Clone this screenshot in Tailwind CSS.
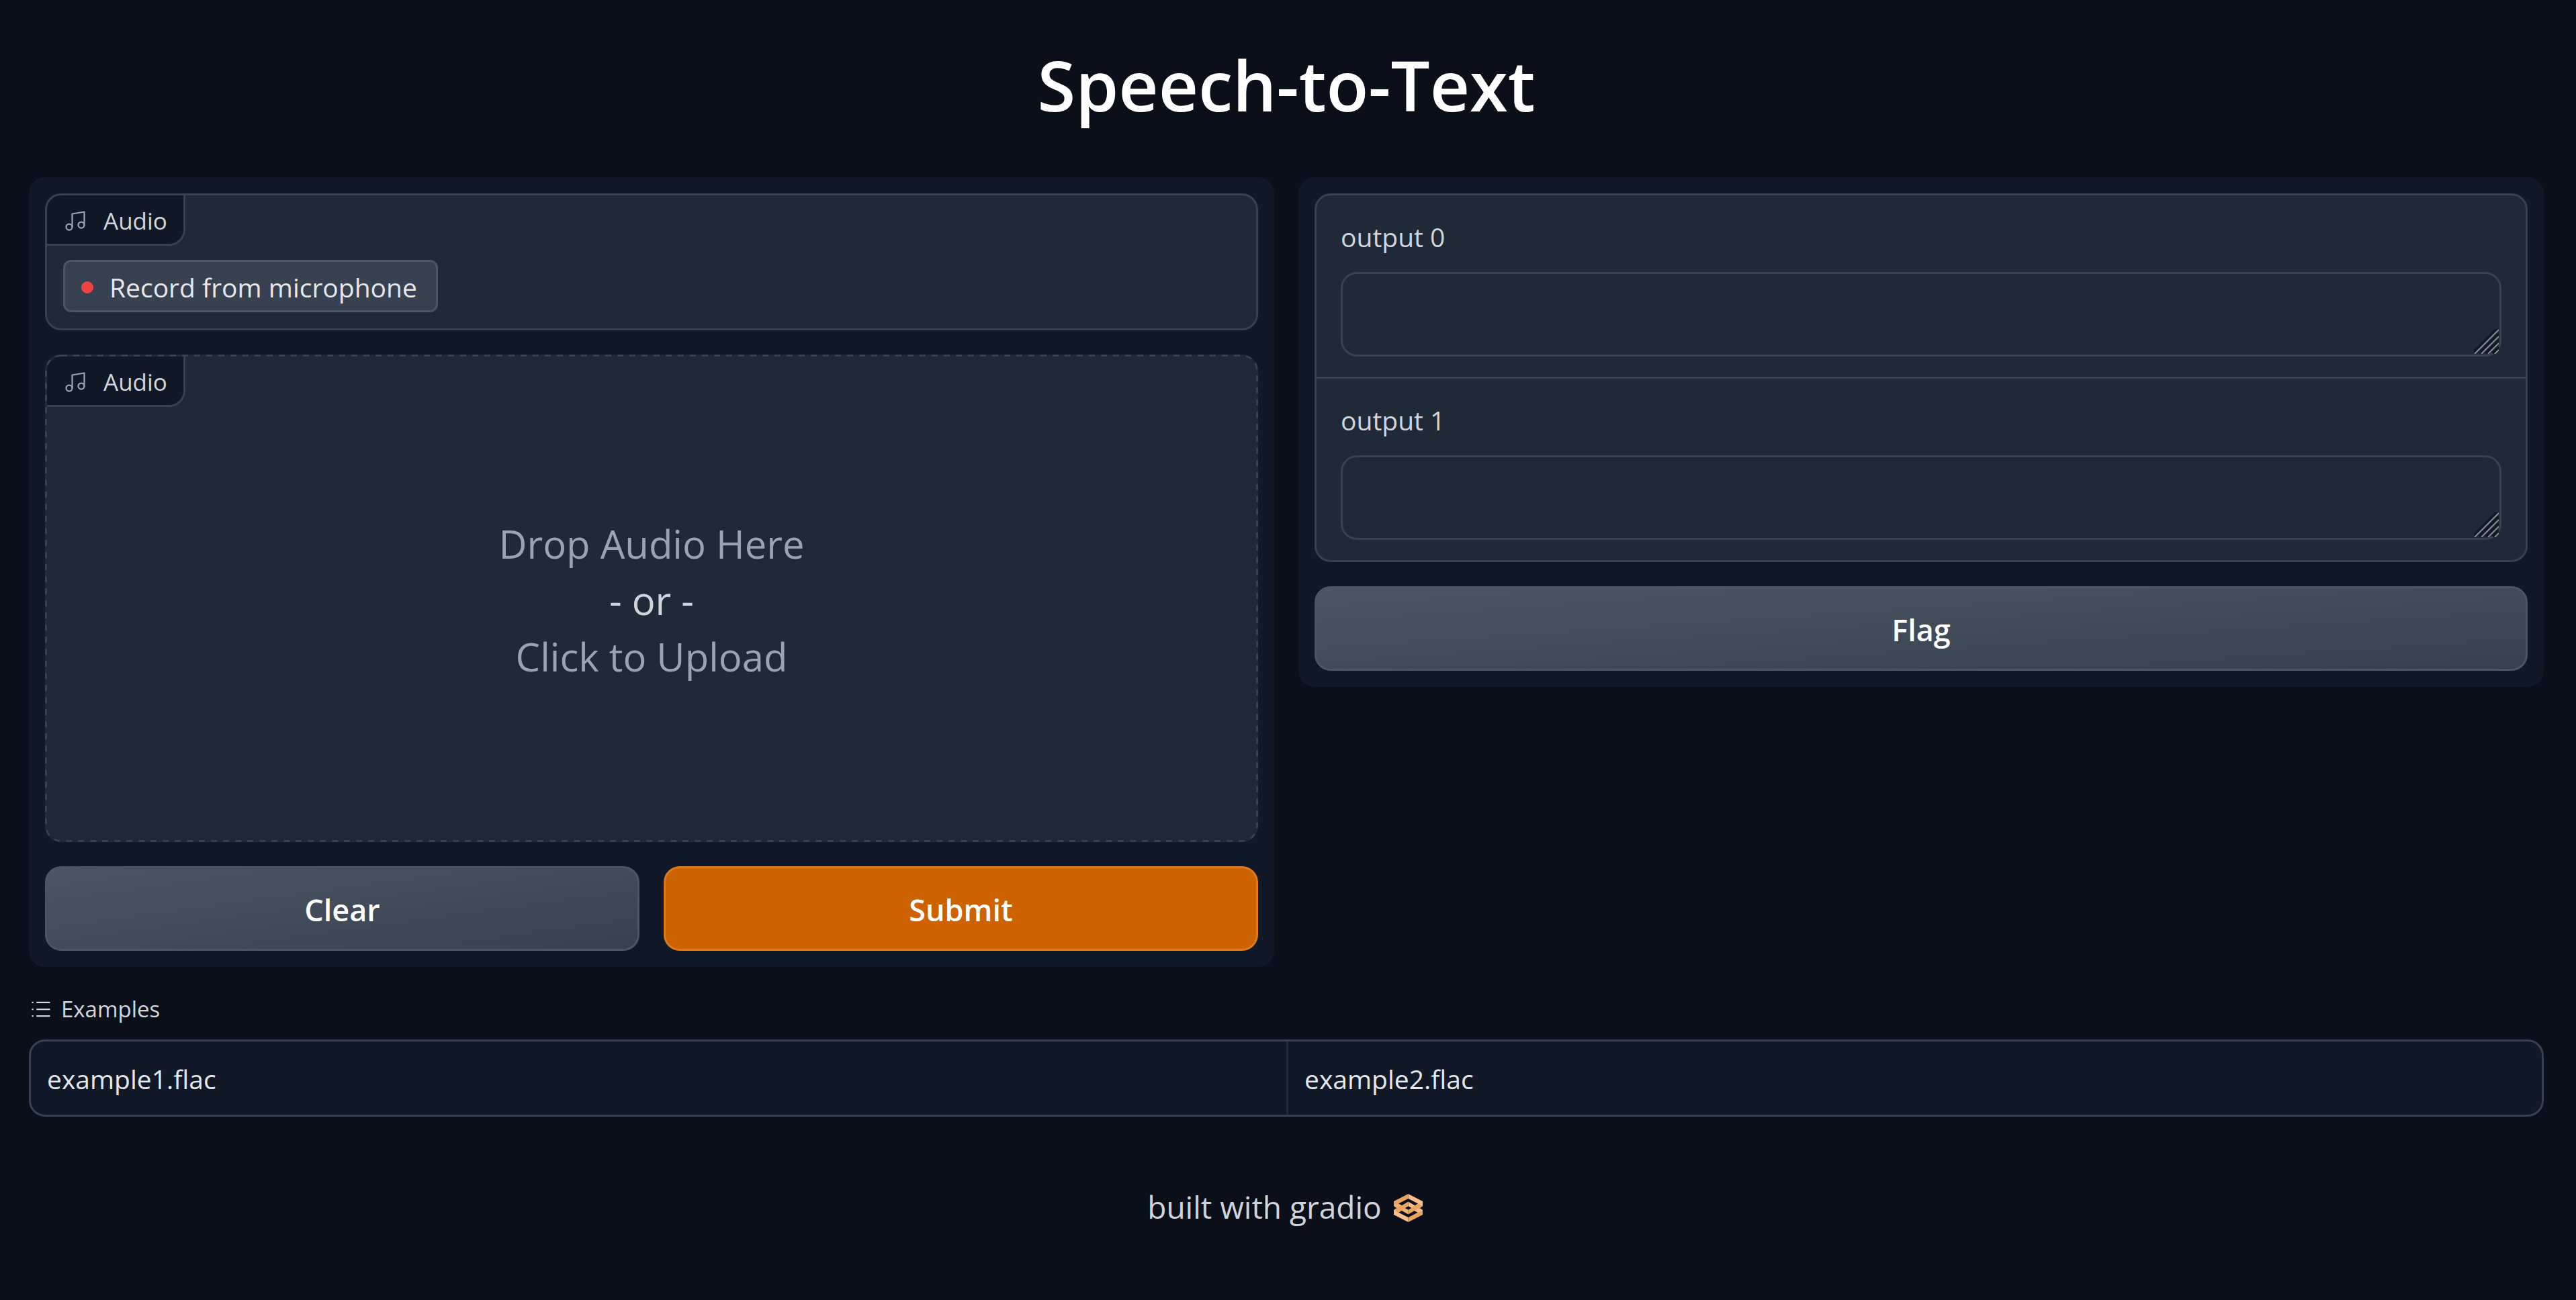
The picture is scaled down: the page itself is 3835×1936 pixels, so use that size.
<!DOCTYPE html>
<html lang="en">
<head>
<meta charset="utf-8">
<title>Speech-to-Text</title>
<script src="https://cdn.jsdelivr.net/npm/@tailwindcss/browser@4"></script>
</head>
<body class="min-h-screen bg-[#0b0f19] font-['Open_Sans','Noto_Sans',sans-serif] text-gray-200">
<main class="flex flex-col pl-[43px] pr-12">
  <h1 class="pt-[54px] text-center text-[103px] leading-[144px] font-semibold text-white">Speech-to-Text</h1>

  <div class="mt-[66px] grid grid-cols-2 items-start gap-9">
    <section class="flex flex-col gap-9 rounded-3xl bg-[#111827] p-6">
      <div class="overflow-hidden rounded-3xl border-3 border-[#374151] bg-[#1f2937]">
        <div class="flex h-[75px] w-[206px] items-center rounded-br-3xl border-r-3 border-b-3 border-[#374151] bg-[#111827] pt-[3px] pl-6 text-[35px] leading-[54px] text-[#d1d5db]">
          <svg class="mr-6 size-9 shrink-0 text-[#9ca3af]" viewBox="0 0 24 24" fill="none" stroke="currentColor" stroke-width="1.5" stroke-linecap="round" stroke-linejoin="round"><path d="M9 18V5l12-2v13"/><circle cx="6" cy="18" r="3"/><circle cx="18" cy="16" r="3"/></svg>
          <span>Audio</span>
        </div>
        <div class="px-6 pt-[21px] pb-6">
          <button class="flex h-[78px] items-center gap-6 rounded-xl border-3 border-[#4b5563] bg-[#374151] pt-[3px] pr-7 pl-6 text-[39px] leading-[60px] text-[#e5e7eb]"><span class="size-[18px] rounded-full bg-[#ef4444]"></span>Record from microphone</button>
        </div>
      </div>

      <div class="relative flex h-[726px] flex-col overflow-hidden rounded-3xl bg-[#1f2937] p-[3px]">
        <div class="flex h-[75px] w-[206px] shrink-0 items-center rounded-br-3xl border-r-3 border-b-3 border-[#374151] bg-[#111827] pt-[3px] pl-6 text-[35px] leading-[54px] text-[#d1d5db]">
          <svg class="mr-6 size-9 shrink-0 text-[#9ca3af]" viewBox="0 0 24 24" fill="none" stroke="currentColor" stroke-width="1.5" stroke-linecap="round" stroke-linejoin="round"><path d="M9 18V5l12-2v13"/><circle cx="6" cy="18" r="3"/><circle cx="18" cy="16" r="3"/></svg>
          <span>Audio</span>
        </div>
        <button class="flex flex-1 flex-col items-center justify-center pb-[69px] text-[58px] leading-[84px] text-[#9ca3af]">
          <span>Drop Audio Here</span>
          <span class="text-[#d1d5db]">- or -</span>
          <span>Click to Upload</span>
        </button>
        <!-- dashed outline -->
        <svg class="pointer-events-none absolute inset-0 size-full" fill="none" stroke-width="3"><rect class="h-[calc(100%-3px)] w-[calc(100%-3px)]" x="1.5" y="1.5" rx="22.5" stroke="#1f2937"/><rect class="h-[calc(100%-3px)] w-[calc(100%-3px)]" x="1.5" y="1.5" rx="22.5" stroke="#374151" stroke-dasharray="9 9"/></svg>
      </div>

      <div class="grid grid-cols-2 gap-9">
        <button class="h-[126px] rounded-3xl border-3 border-[#4b5563] bg-linear-to-br from-[#4b5563] to-[#374151] pt-1 text-[45px] font-semibold text-white">Clear</button>
        <button class="h-[126px] rounded-3xl border-3 border-[#dc7a1c] bg-[#cd6200] pt-1 text-[45px] font-semibold text-white">Submit</button>
      </div>
    </section>

    <section class="flex flex-col gap-9 rounded-3xl bg-[#111827] p-6">
      <div class="flex flex-col divide-y-3 divide-[#374151] rounded-3xl border-3 border-[#374151] bg-[#1f2937]">
        <div class="flex flex-col px-9 pt-8 pb-[30px]">
          <label for="out0" class="mb-[22px] text-[39px] leading-[60px] text-[#d1d5db]">output 0</label>
          <div class="relative">
            <textarea id="out0" class="block h-[126px] w-full resize-none rounded-3xl border-3 border-[#374151] bg-[#1f2937]"></textarea>
            <svg class="pointer-events-none absolute right-1 bottom-1 size-[37px]" viewBox="0 0 37 37" fill="none"><path d="M-2 36L37-3M8 36L37 7M18 36L37 17M28 36L37 27" stroke="#111823" stroke-width="4"/><path d="M1 37L37 1M11 37L37 11M21 37L37 21M31 37L37 31" stroke="#868c94" stroke-width="2"/></svg>
          </div>
        </div>
        <div class="flex flex-col px-9 pt-8 pb-[30px]">
          <label for="out1" class="mb-[22px] text-[39px] leading-[60px] text-[#d1d5db]">output 1</label>
          <div class="relative">
            <textarea id="out1" class="block h-[126px] w-full resize-none rounded-3xl border-3 border-[#374151] bg-[#1f2937]"></textarea>
            <svg class="pointer-events-none absolute right-1 bottom-1 size-[37px]" viewBox="0 0 37 37" fill="none"><path d="M-2 36L37-3M8 36L37 7M18 36L37 17M28 36L37 27" stroke="#111823" stroke-width="4"/><path d="M1 37L37 1M11 37L37 11M21 37L37 21M31 37L37 31" stroke="#868c94" stroke-width="2"/></svg>
          </div>
        </div>
      </div>
      <button class="h-[126px] rounded-3xl border-3 border-[#4b5563] bg-linear-to-br from-[#4b5563] to-[#374151] pt-1 text-[45px] font-semibold text-white">Flag</button>
    </section>
  </div>

  <h2 class="mt-9 flex items-center text-[33px] leading-[54px] text-[#d1d5db]">
    <svg class="mr-3 size-9" viewBox="0 0 32 32" fill="currentColor"><path d="M10 6h18v2H10zM10 15h18v2H10zM10 24h18v2H10zM4 6h2v2H4zM4 15h2v2H4zM4 24h2v2H4z"/></svg>Examples
  </h2>
  <div class="mt-[18px] overflow-hidden rounded-3xl border-3 border-[#374151] bg-[#111827]">
    <table class="w-full table-fixed border-separate border-spacing-0 text-[39px] leading-[57px] text-[#e5e7eb]">
      <tr><td class="px-6 pt-[27px] pb-[25px]">example1.flac</td><td class="border-l-3 border-[#1f2937] px-6 pt-[27px] pb-[25px]">example2.flac</td></tr>
    </table>
  </div>

  <footer class="mt-[98px] flex justify-center pr-1 text-[46px] leading-[72px] text-[#d1d5db]">
    <a href="#" class="flex items-center gap-[18px]">built with gradio
      <svg class="mt-1 h-[42px] w-[43px]" viewBox="0 0 43 42">
        <path fill="#eba360" d="M0 11L21.500 0V7L7 14.500L11 17L4 21L0 18Z"/>
        <path fill="#f7bd8a" d="M21.500 0L43 11V18L39 21L32 17L36 14.500L21.500 7Z"/>
        <path fill="#f7bd8a" d="M0 24L4 21L7 27.500L21.500 35V42L0 31Z"/>
        <path fill="#eba360" d="M43 24L39 21L36 27.500L21.500 35V42L43 31Z"/>
        <path fill="#f7bd8a" d="M21.500 11.500L43 24L36 28L26 22.500V21L21.500 18.500Z"/>
        <path fill="#f2ad70" d="M0 18L7 14.500L17 20V21L21.500 23.500V30.500Z"/>
        <path fill="#eba360" d="M0 24L21.500 11.500V18.500L7 28Z"/>
        <path fill="#eba360" d="M43 18L36 14.500L21.500 23.500V30.500L43 18Z"/>
        <path fill="#0b0f19" d="M17 21L21.500 18.500L26 21L21.500 23.500Z"/>
      </svg>
    </a>
  </footer>
</main>
</body>
</html>
